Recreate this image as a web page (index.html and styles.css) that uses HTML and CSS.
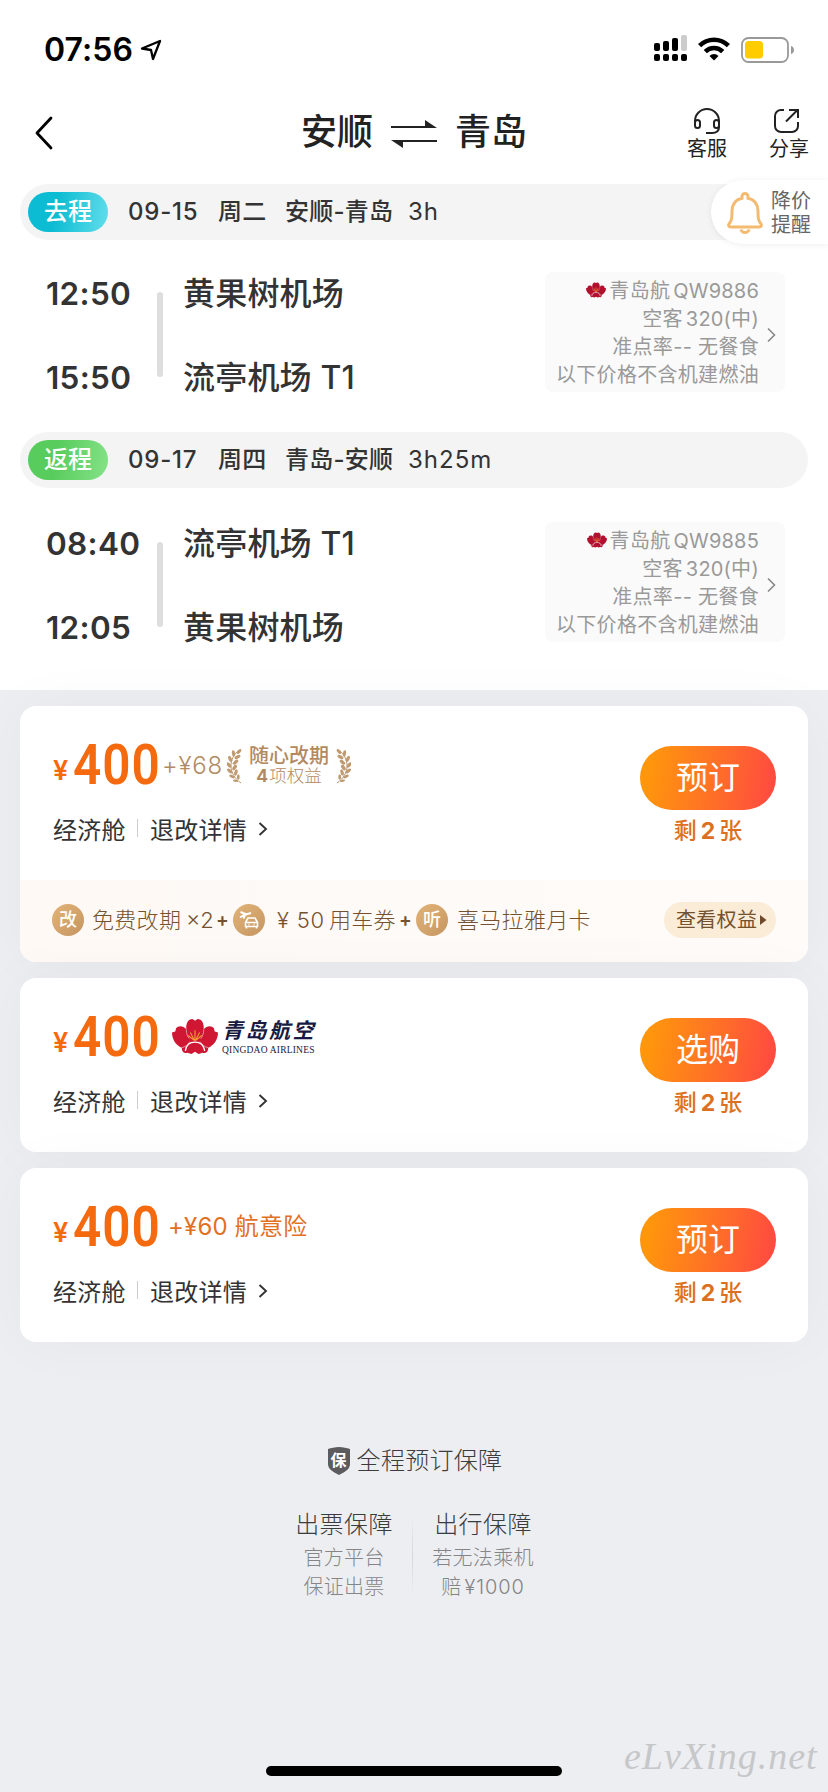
FILE: index.html
```html
<!DOCTYPE html>
<html lang="zh-CN">
<head>
<meta charset="utf-8">
<title>安顺 ⇌ 青岛</title>
<link rel="stylesheet" href="styles.css">
</head>
<body>
<svg class="defs" width="0" height="0" aria-hidden="true">
  <symbol id="flower" viewBox="0 0 45 34">
    <path fill="currentColor" d="M14 10C13.500 4 16 0 20 0l2.500 1.500L25 0c4 0 6.500 4 6 10 3-4 8-4 10-1l.8 3L45 13c0 7-4 12.500-9.500 15 0 4-2.500 6-5.500 5l-4 1-3.500-2-3.500 2-4-1c-3 1-5.500-1-5.500-5C4 25.500 0 20 0 13l3.200-1L4 9c2-3 7-3 10 1z"/>
    <path fill="none" stroke="#fff" stroke-width=".5" d="M14 10c0 4 1 7 3 9M31 10c0 4-1 7-3 9M9.500 28c4-1 6-3 8-6m18 6c-4-1-6-3-8-6"/>
    <path fill="none" stroke="#fff" stroke-width="1.200" d="M13 31c1-6 4-8.500 9.500-8.500S31 25 32 31"/>
    <path stroke="#f59a35" stroke-width="1.100" fill="none" d="M22.500 21V11m-.5 10-4-8m5 8 4-8m-5 8-6-5m7 5 6-5"/>
  </symbol>
  <symbol id="laurel" viewBox="0 0 16 36">
    <path fill="none" stroke="#bd976d" stroke-width="1" d="M12 2C1 11 1 26 14 35"/>
    <g fill="#c09a70"><ellipse cx="12" cy="3.500" rx="1.600" ry="3" transform="rotate(40 12 3.500)"/><ellipse cx="6.500" cy="5.500" rx="1.600" ry="3.200" transform="rotate(-8 6.500 5.500)"/><ellipse cx="10.500" cy="9" rx="1.700" ry="3.300" transform="rotate(62 10.500 9)"/><ellipse cx="3.200" cy="11" rx="1.700" ry="3.200" transform="rotate(-26 3.200 11)"/><ellipse cx="8.500" cy="14.200" rx="1.700" ry="3.300" transform="rotate(50 8.500 14.200)"/><ellipse cx="1.900" cy="17" rx="1.700" ry="3.200" transform="rotate(-38 1.900 17)"/><ellipse cx="7.600" cy="19.500" rx="1.700" ry="3.200" transform="rotate(35 7.600 19.500)"/><ellipse cx="2.700" cy="23" rx="1.600" ry="3.200" transform="rotate(-50 2.700 23)"/><ellipse cx="8.900" cy="24.500" rx="1.600" ry="3.200" transform="rotate(15 8.900 24.500)"/><ellipse cx="5" cy="28.500" rx="1.500" ry="3" transform="rotate(-65 5 28.500)"/><ellipse cx="11.300" cy="29" rx="1.400" ry="2.800" transform="rotate(0 11.300 29)"/><ellipse cx="8.500" cy="32.800" rx="1.200" ry="2.600" transform="rotate(-80 8.500 32.800)"/></g>
  </symbol>
</svg>

<div class="screen">
  <header class="status">
    <span class="clock">07:56</span>
    <svg class="locate" width="22" height="22" viewBox="0 0 22 22"><path d="M2 9.500 20 2 13 20 11 11z" fill="none" stroke="#000" stroke-width="2.300" stroke-linejoin="round"/></svg>
    <svg class="signal" width="33" height="26" viewBox="0 0 33 26"><rect x="0" y="8" width="6" height="8" rx="2"/><rect x="9" y="6" width="6" height="10" rx="2"/><rect x="18" y="3" width="6" height="13" rx="2"/><rect x="27" y="0" width="6" height="16" rx="2" fill="#ccc"/><rect x="0" y="19" width="6" height="7" rx="2"/><rect x="9" y="19" width="6" height="7" rx="2"/><rect x="18" y="19" width="6" height="7" rx="2"/><rect x="27" y="19" width="6" height="7" rx="2"/></svg>
    <svg class="wifi" width="32" height="24" viewBox="0 0 32 24"><g fill="none" stroke="#000" stroke-width="4.500"><path d="M1.600 8.700a20.400 20.400 0 0 1 28.800 0"/><path d="M7.300 14.600a12.300 12.300 0 0 1 17.400 0"/></g><path d="M11.500 19a6.300 6.300 0 0 1 9 0L16 23.500z"/></svg>
    <svg class="battery" width="54" height="26" viewBox="0 0 54 26"><rect x="1" y="1" width="46" height="24" rx="6.500" fill="#fff" stroke="#999" stroke-width="1.800"/><rect x="4" y="4" width="18" height="17.500" rx="3.500" fill="#fc0"/><path d="M50 9c4 1 4 7 0 8z" fill="#999"/></svg>
  </header>

  <nav class="nav">
    <svg class="back" width="20" height="36" viewBox="0 0 20 36"><path d="M17 3 3 18l14 15" fill="none" stroke="#000" stroke-width="2.800" stroke-linecap="round" stroke-linejoin="round"/></svg>
    <h1 class="route"><span>安顺</span><svg width="46" height="28" viewBox="0 0 46 28"><path d="M0 6h34V0l12 8H0zM46 22H12v6L0 20h46z" fill="#222"/></svg><span>青岛</span></h1>
    <div class="tool"><svg width="28" height="28" viewBox="0 0 28 28" fill="none" stroke="#222" stroke-width="2"><path d="M2 16v-2a12 12 0 0 1 24 0v6c0 4-3 6-7 6h-6"/><rect x="2" y="13" width="5" height="8" rx="2.500"/><rect x="21" y="13" width="5" height="8" rx="2.500"/></svg><span>客服</span></div>
    <div class="tool share"><svg width="28" height="28" viewBox="0 0 28 28" fill="none" stroke="#222" stroke-width="2"><path d="M12 3H9a6 6 0 0 0-6 6v10a6 6 0 0 0 6 6h11a6 6 0 0 0 6-6v-4M14 14.500 25.500 3M17 3h9v8"/></svg><span>分享</span></div>
  </nav>

  <main>
    <section class="leg">
      <div class="legbar"><b class="tag out">去程</b><strong class="date">09-15</strong><strong>周二</strong><strong>安顺-青岛</strong><span>3h</span></div>
      <div class="flight">
        <div class="times"><span>12:50</span><span>15:50</span></div>
        <i class="rail"></i>
        <div class="places"><span>黄果树机场</span><span>流亭机场 T1</span></div>
        <div class="plane">
          <div class="info"><p class="airline"><svg width="20" height="16"><use href="#flower"/></svg>青岛航<span class="no">QW9886</span></p><p>空客<span class="no">320(</span>中)</p><p>准点率-- 无餐食</p><p>以下价格不含机建燃油</p></div>
          <svg class="go" width="9" height="16" viewBox="0 0 9 16"><path d="m1 1.500 6.500 6.500L1 14.500" fill="none" stroke="#888" stroke-width="1.600"/></svg>
        </div>
      </div>
      <aside class="alert"><svg width="36" height="42" viewBox="0 0 36 42"><path d="M15 4.500a3 3 0 0 1 6 0v1.700C27.500 7.500 31 12.500 31 19c0 8 .5 10 3 13 1 1.500 0 3-1.500 3h-29C2 35 1 33.500 2 32c2.500-3 3-5 3-13C5 12.500 8.500 7.500 15 6.200z" fill="none" stroke="#f4bb70" stroke-width="3"/><path d="M14 37.500c1 4 7 4 8 0" fill="none" stroke="#f4bb70" stroke-width="3"/></svg><span>降价<br>提醒</span></aside>
    </section>

    <section class="leg second">
      <div class="legbar"><b class="tag ret">返程</b><strong class="date">09-17</strong><strong>周四</strong><strong>青岛-安顺</strong><span>3h25m</span></div>
      <div class="flight">
        <div class="times"><span>08:40</span><span>12:05</span></div>
        <i class="rail"></i>
        <div class="places"><span>流亭机场 T1</span><span>黄果树机场</span></div>
        <div class="plane">
          <div class="info"><p class="airline"><svg width="20" height="16"><use href="#flower"/></svg>青岛航<span class="no">QW9885</span></p><p>空客<span class="no">320(</span>中)</p><p>准点率-- 无餐食</p><p>以下价格不含机建燃油</p></div>
          <svg class="go" width="9" height="16" viewBox="0 0 9 16"><path d="m1 1.500 6.500 6.500L1 14.500" fill="none" stroke="#888" stroke-width="1.600"/></svg>
        </div>
      </div>
    </section>
  </main>

  <div class="offers">
    <article class="card">
      <div class="offer">
        <div class="detail">
          <div class="price"><span class="yen">¥</span><span class="amount">400</span><span class="addon gold">+¥68</span>
            <div class="badge"><svg width="16" height="36"><use href="#laurel"/></svg><p class="perk"><b>随心改期</b><span><em>4</em>项权益</span></p><svg class="flip" width="16" height="36"><use href="#laurel"/></svg></div></div>
          <div class="cabin"><span>经济舱</span><i></i><span>退改详情</span><svg width="10" height="14" viewBox="0 0 10 14"><path d="m1.500 1 6.500 6-6.500 6" fill="none" stroke="#333" stroke-width="1.900"/></svg></div>
        </div>
        <div class="action"><button class="book">预订</button><p class="left">剩<b>2</b>张</p></div>
      </div>
      <div class="perks">
        <b class="coin">改</b><span class="p1">免费改期</span><span class="x2">×2</span><b class="plus">+</b>
        <span class="coin c2"><svg width="32" height="32" viewBox="0 0 32 32" fill="none" stroke="#fff" stroke-width="1.800"><path d="M12.500 22.500v-4l2.500-4.500h7l2.500 4.500v4zM13.500 22v2.500m10-2.500v2.500M12.500 18.500h12M15.500 20.500h1m4 0h1" stroke-width="1.600"/><path d="m7 13.500 4-2.500 7-2M7.500 8l6 2.500M12 11l-1.500 3.500" stroke-width="2"/></svg></span>
        <span class="p2">¥ 50</span><span class="p3">用车券</span><b class="plus">+</b><b class="coin c3">听</b><span class="p4">喜马拉雅月卡</span>
        <a class="more">查看权益<svg width="7" height="10" viewBox="0 0 7 10"><path d="M0 0l6.500 5L0 10z" fill="#6e4b2c"/></svg></a>
      </div>
    </article>

    <article class="card">
      <div class="offer">
        <div class="detail">
          <div class="price"><span class="yen">¥</span><span class="amount">400</span>
            <div class="brand"><svg width="46" height="35"><use href="#flower"/></svg><p><b>青岛航空</b><span>QINGDAO AIRLINES</span></p></div></div>
          <div class="cabin"><span>经济舱</span><i></i><span>退改详情</span><svg width="10" height="14" viewBox="0 0 10 14"><path d="m1.500 1 6.500 6-6.500 6" fill="none" stroke="#333" stroke-width="1.900"/></svg></div>
        </div>
        <div class="action"><button class="book">选购</button><p class="left">剩<b>2</b>张</p></div>
      </div>
    </article>

    <article class="card">
      <div class="offer">
        <div class="detail">
          <div class="price"><span class="yen">¥</span><span class="amount">400</span><span class="addon insure">+¥60 航意险</span></div>
          <div class="cabin"><span>经济舱</span><i></i><span>退改详情</span><svg width="10" height="14" viewBox="0 0 10 14"><path d="m1.500 1 6.500 6-6.500 6" fill="none" stroke="#333" stroke-width="1.900"/></svg></div>
        </div>
        <div class="action"><button class="book">预订</button><p class="left">剩<b>2</b>张</p></div>
      </div>
    </article>
  </div>

  <footer class="promise">
    <h2><span class="shield"><svg width="22" height="28" viewBox="0 0 22 28"><path d="M11 0c4 0 8 1 11 2v15c0 5-5 8-11 11C5 25 0 22 0 17V2c3-1 7-2 11-2z" fill="#5c5c5e"/></svg><b>保</b></span>全程预订保障</h2>
    <div class="cols">
      <div><h3>出票保障</h3><p>官方平台</p><p>保证出票</p></div>
      <i></i>
      <div><h3>出行保障</h3><p>若无法乘机</p><p>赔<span class="sum">¥1000</span></p></div>
    </div>
  </footer>
  <div class="bottom"><i class="home"></i><span class="mark">eLvXing.net</span></div>
</div>
</body>
</html>
```
FILE: styles.css
```css
* { box-sizing: border-box; margin: 0; padding: 0; }
body { font-family: Inter, "Noto Sans CJK SC", sans-serif; background: #edeef2; color: #333; }
svg { display: block; flex: none; }
.defs { position: absolute; }
.screen { width: 828px; height: 1792px; overflow: hidden; display: flex; flex-direction: column; }
span, b, strong, p { white-space: nowrap; }

.status { height: 96px; background: #fff; display: flex; align-items: flex-start; padding: 33px 33px 0 44px; flex: none; }
.clock { font-size: 32px; line-height: 33px; font-weight: 600; color: #000; width: 96px; letter-spacing: .1px; }
.locate { margin-top: 6px; }
.signal { margin: 2px 11px 0 auto; }
.wifi { margin: 4px 11px 0 0; }
.battery { margin-top: 4px; }

.nav { height: 88px; background: #fff; display: flex; align-items: flex-start; padding: 12px 18px 0 34px; flex: none; color: #222; }
.back { margin-top: 7px; }
.route { display: flex; align-items: center; margin-left: 247px; height: 48px; font-size: 36px; font-weight: 500; width: 366px; line-height: 44px; }
.route svg { margin: 4px 18px 0; }
.tool { width: 42px; display: flex; flex-direction: column; align-items: center; font-size: 20px; line-height: 24px; }
.tool span { margin-top: 2px; }
.tool svg { margin-top: -1px; }
.tool + .tool { margin-left: 40px; }
.share svg { margin-right: 6px; }
.route + .tool { margin-left: 19px; }

main { background: #fff; height: 506px; padding: 0 20px; flex: none; }
.leg { height: 248px; position: relative; }
.legbar { height: 56px; border-radius: 28px; background: #f4f4f4; display: grid; grid-template-columns: 80px 90px 67px 123px 120px; padding: 0 8px; align-items: center; font-size: 24px; line-height: 32px; }
.legbar strong { font-weight: 500; letter-spacing: .2px; }
.legbar strong + strong, .legbar .date { margin-left: 20px; }
.legbar .date { letter-spacing: .8px; }
.legbar span { margin-left: 20px; letter-spacing: 1px; }
.tag { height: 40px; line-height: 40px; border-radius: 20px; color: #fff; text-align: center; font-weight: 500; }
.out { background: linear-gradient(100deg, #0cbcd2 35%, #62deec); }
.ret { background: linear-gradient(100deg, #58cc5c 35%, #85e288); }
.flight { display: grid; grid-template-columns: 137px 6px 382px 240px; padding-top: 32px; }
.second .flight { padding-top: 34px; }
.times, .places { font-size: 32px; font-weight: 500; line-height: 44px; display: flex; flex-direction: column; gap: 40px; }
.times { padding-left: 26px; font-weight: 600; font-size: 31.500px; letter-spacing: .3px; }
.places { padding-left: 20px; letter-spacing: .2px; }
.rail { height: 85px; margin-top: 20px; background: #dedede; border-radius: 3px; }
.plane { height: 120px; background: #fafafa; border-radius: 8px; display: flex; align-items: center; padding-right: 9px; gap: 8px; }
.info { flex: 1; text-align: right; font-size: 20px; line-height: 28px; color: #999; letter-spacing: .3px; padding-top: 2px; }
.info p { display: flex; justify-content: flex-end; white-space: pre; }
.airline svg { margin: 5px 3px 0 0; color: #b3102f; }
.no { letter-spacing: .2px; margin-left: 3px; }
.go { margin-top: 5px; }
.alert { position: absolute; left: 691px; top: -4px; width: 117px; height: 64px; border-radius: 32px 0 0 32px; background: #fff; box-shadow: 0 1px 6px rgba(0,0,0,.07); display: flex; align-items: center; padding-left: 16px; padding-top: 2px; gap: 8px; font-size: 20px; line-height: 24px; color: #666; }

.offers { padding: 16px 20px 0; display: flex; flex-direction: column; gap: 16px; flex: none; }
.card { background: #fff; border-radius: 16px; box-shadow: 0 0 60px rgba(0,0,0,.035); }
.offer { height: 174px; display: flex; justify-content: space-between; padding: 32px 32px 0 33px; }
.price { display: flex; height: 56px; align-items: flex-start; color: #f66a0f; }
.yen { font-size: 27px; line-height: 34px; font-weight: 600; width: 20px; margin-top: 16px; }
.amount { font-family: Roboto, sans-serif; font-size: 56px; line-height: 56px; font-weight: 600; letter-spacing: 1px; width: 90px; margin-top: -1px; transform: scaleX(.885); transform-origin: left; }
.addon { font-size: 24px; line-height: 32px; margin-top: 12px; letter-spacing: .2px; }
.gold { color: #b28a62; font-weight: 300; width: 64px; margin-left: -1px; letter-spacing: .8px; }
.badge { display: flex; margin: 10px 0 0 1px; color: #b28a62; gap: 5px; }
.perk { display: flex; flex-direction: column; align-items: center; width: 82px; font-size: 17.500px; line-height: 20px; font-weight: 300; margin-top: -2px; }
.perk b { font-size: 20px; line-height: 20px; font-weight: 500; }
.perk em { font-style: normal; font-weight: 700; margin-right: 1px; }
.flip { transform: scaleX(-1); }
.insure { margin-left: 5px; color: #e2711f; margin-top: 11px; }
.cabin { display: flex; align-items: center; height: 32px; margin-top: 18px; font-size: 24px; color: #333; letter-spacing: .3px; }
.cabin i { width: 1px; height: 18px; background: #ccc; margin: 0 12px 0 11px; }
.cabin svg { margin: 2px 0 0 11px; }
.action { width: 136px; display: flex; flex-direction: column; align-items: center; padding-top: 8px; }
.book { width: 136px; height: 64px; border: 0; border-radius: 32px; background: linear-gradient(100deg, #ff960c 8%, #ff7424 50%, #ff4b40 95%); color: #fff; font: 400 32px/64px Inter, "Noto Sans CJK SC", sans-serif; }
.left { font-size: 23px; line-height: 32px; font-weight: 500; color: #dc701e; margin-top: 5px; }
.left b { margin: 0 4px; font-weight: 700; }
.perks { height: 82px; background: linear-gradient(90deg, #fef9f5, #fefbf9); border-radius: 0 0 16px 16px; display: flex; align-items: center; padding: 0 32px 2px; font-size: 22px; line-height: 32px; font-weight: 300; color: #75522f; letter-spacing: .3px; }
.coin { width: 32px; height: 32px; border-radius: 16px; background: linear-gradient(135deg, #e3b478, #c49560); color: #fff; font-size: 18px; font-weight: 500; text-align: center; line-height: 32px; flex: none; letter-spacing: 0; }
.p1 { width: 94px; margin-left: 8px; }
.x2 { width: 30px; letter-spacing: 0; }
.plus { width: 17px; font-weight: 600; font-size: 19px; }
.p2 { width: 52px; margin-left: 12px; letter-spacing: .8px; }
.p3 { width: 70px; }
.p4 { margin-left: 9px; }
.more { margin-left: auto; width: 112px; height: 36px; border-radius: 18px; background: #fbecd8; font-size: 20px; display: flex; align-items: center; padding-left: 12px; gap: 3px; font-weight: 400; white-space: nowrap; }
.brand { display: flex; margin: 9px 0 0 9px; gap: 4px; color: #171a42; }
.brand svg { color: #cf1733; }
.brand p { display: flex; flex-direction: column; margin-top: -2px; }
.brand b { font-size: 21px; line-height: 25px; letter-spacing: 2.500px; font-style: italic; font-weight: 700; font-family: "Noto Sans CJK SC", sans-serif; }
.brand span { font: 9.500px/11px "Liberation Serif", serif; letter-spacing: .2px; margin-top: 3px; }

.promise { margin-top: 103px; padding-left: 2px; display: flex; flex-direction: column; align-items: center; font-weight: 300; color: #3c3c3c; flex: none; }
.promise h2 { font-size: 24px; line-height: 32px; font-weight: 300; display: flex; gap: 7px; align-items: center; letter-spacing: .3px; }
.shield { position: relative; width: 22px; height: 28px; }
.shield b { position: absolute; inset: 0; color: #fff; font-size: 16px; line-height: 26px; text-align: center; font-weight: 700; letter-spacing: 0; }
.cols { display: grid; grid-template-columns: 120px 1px 124px; column-gap: 8px; margin-top: 32px; padding-right: 1px; text-align: center; }
.cols h3 { font-size: 24px; line-height: 32px; font-weight: 300; letter-spacing: .4px; }
.cols p { font-size: 20px; line-height: 29px; color: #858587; letter-spacing: .3px; }
.cols h3 + p { margin-top: 3px; }
.cols i { height: 78px; margin-top: 8px; background: linear-gradient(transparent, #d8d6d6, transparent); }
.sum { margin-left: 3px; letter-spacing: .9px; }

.bottom { margin-top: auto; height: 80px; display: flex; padding-left: 266px; flex: none; }
.home { width: 296px; height: 10px; border-radius: 5px; background: #000; margin-top: 54px; }
.mark { margin: 21px 0 0 62px; font: italic 400 38px/46px "Liberation Serif", serif; color: #c6c7c9; letter-spacing: 1px; }
```
